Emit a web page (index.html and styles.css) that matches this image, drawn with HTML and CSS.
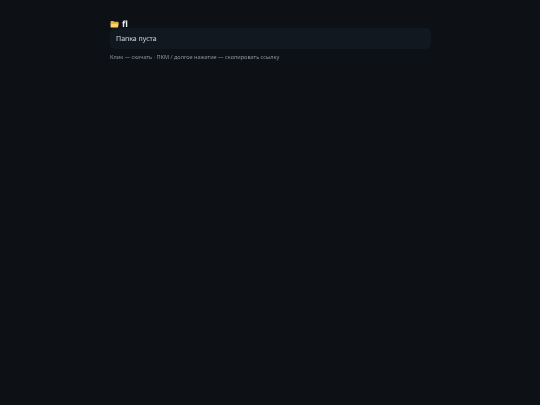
FILE: index.html
```html
<!DOCTYPE html>
<html lang="ru">
<head>
<meta charset="utf-8">
<title>fl</title>
<link rel="stylesheet" href="styles.css">
</head>
<body>
<main class="wrap">
  <h1 class="title">
    <svg class="folder" viewBox="0 0 16 14" aria-hidden="true">
      <path d="M1 3C1 2.200 1.600 1.500 2.400 1.500H6L7.500 3H14c.6 0 1 .4 1 1v2H1z" fill="#e0b040"/>
      <path d="M1 5.500h14.600l-1.200 6.700c-.1.500-.5.800-1 .8H2c-.6 0-1-.4-1-1z" fill="#fcd462"/>
    </svg>
    <span>fl</span>
  </h1>
  <div class="card">Папка пуста</div>
  <p class="hint">Клик — скачать · ПКМ / долгое нажатие — скопировать ссылку</p>
</main>
</body>
</html>
```
FILE: styles.css
```css
html, body {
  margin: 0;
  height: 100%;
  background: #0d1116;
}
body {
  font-family: "Noto Sans", "Open Sans", sans-serif;
  color: #e6edf3;
  text-rendering: geometricPrecision;
}
.wrap {
  width: 321px;
  margin: 0 auto;
  padding-top: 19px;
  will-change: transform;
}
.title {
  display: flex;
  align-items: center;
  gap: 3px;
  margin: 0 0 -1px;
  height: 9px;
  padding-top: 1px;
  font-size: 8.5px;
  line-height: 9px;
  font-weight: 700;
}
.folder {
  width: 9px;
  height: 8px;
  margin-top: -1px;
}
.card {
  height: 20px;
  padding: 1px 6px 0;
  border-radius: 5px;
  background: #111820;
  font-size: 7px;
  line-height: 21px;
  color: #d5dce3;
}
.hint {
  margin: 4px 0 0;
  font-size: 5.55px;
  line-height: 8px;
  color: #8b949e;
}
```
